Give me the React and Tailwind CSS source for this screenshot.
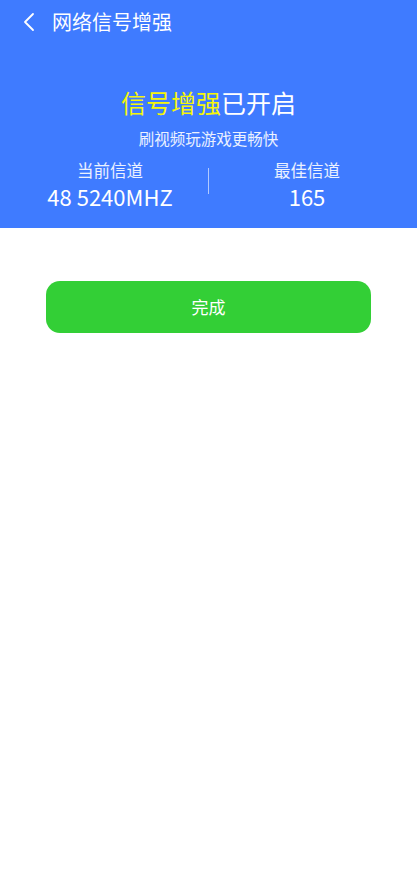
const font = { fontFamily: '"Noto Sans CJK SC", "Noto Sans", sans-serif' };

function Back() {
  return (
    <svg width="14" height="20" viewBox="0 0 14 20" fill="none" className="ml-[4px]">
      <path d="M11 2 L3 10 L11 18" stroke="white" strokeWidth="1.8" strokeLinecap="round" strokeLinejoin="round" />
    </svg>
  );
}

export default function App() {
  return (
    <div className="min-h-[885px] w-full bg-white" style={font}>
      <header className="h-[228px] bg-[#3f7bff] text-white">
        <div className="flex h-[44px] items-center pl-[18px]">
          <Back />
          <h1 className="ml-[16px] text-[20px] leading-none">网络信号增强</h1>
        </div>
        <div className="mt-[42px] text-center text-[25px] leading-[32px]">
          <span className="text-[#f5f50a]">信号增强</span>已开启
        </div>
        <p className="mt-[9px] text-center text-[15.5px] leading-[22px] text-white/90">刷视频玩游戏更畅快</p>
        <div className="mt-[9px] flex items-start px-[12px]">
          <div className="flex-1 text-center">
            <div className="text-[16.5px] leading-[24px] text-white/90">当前信道</div>
            <div className="text-[22px] leading-[28px]">48 5240MHZ</div>
          </div>
          <div className="mt-[10px] h-[26px] w-px bg-white/60" />
          <div className="flex-1 text-center">
            <div className="text-[16.5px] leading-[24px] text-white/90">最佳信道</div>
            <div className="text-[22px] leading-[28px]">165</div>
          </div>
        </div>
      </header>
      <div className="px-[46px] pt-[53px]">
        <button className="flex h-[52px] w-full items-center justify-center rounded-[14px] bg-[#33cf36] text-[17px] text-white">
          完成
        </button>
      </div>
    </div>
  );
}
